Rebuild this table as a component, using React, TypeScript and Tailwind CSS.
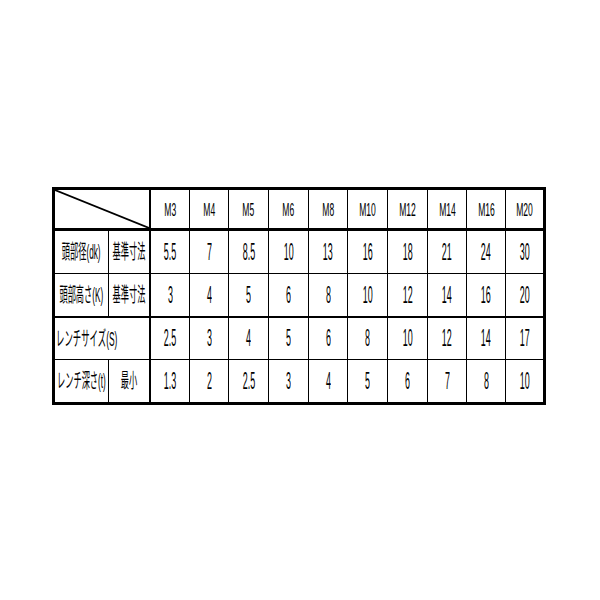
const cols =
  'grid grid-cols-[54px_42px_39px_39px_40px_40px_39px_40px_40px_39px_39px_37px]'

const sizes = ['M3', 'M4', 'M5', 'M6', 'M8', 'M10', 'M12', 'M14', 'M16', 'M20']

const rows = [
  {
    label: '頭部径(dk)',
    sub: '基準寸法',
    values: ['5.5', '7', '8.5', '10', '13', '16', '18', '21', '24', '30'],
    rowClass: 'h-[43px] border-b border-black',
  },
  {
    label: '頭部高さ(K)',
    sub: '基準寸法',
    values: ['3', '4', '5', '6', '8', '10', '12', '14', '16', '20'],
    rowClass: 'h-[44px] border-b-2 border-black',
  },
  {
    label: 'レンチサイズ(S)',
    sub: '',
    values: ['2.5', '3', '4', '5', '6', '8', '10', '12', '14', '17'],
    rowClass: 'h-[42px] border-b border-black',
  },
  {
    label: 'レンチ深さ(t)',
    sub: '最小',
    values: ['1.3', '2', '2.5', '3', '4', '5', '6', '7', '8', '10'],
    rowClass: 'h-[42px]',
  },
]

const jp = "font-['Liberation_Sans','Noto_Sans_CJK_JP',sans-serif]"

const Label = ({ text, left }: { text: string; left?: boolean }) => (
  <span
    className={
      left
        ? `inline-block whitespace-nowrap ${jp} text-[20px] leading-none text-black scale-x-[0.42] origin-left`
        : `inline-block whitespace-nowrap ${jp} text-[20px] leading-none text-black scale-x-[0.41]`
    }
  >
    {text}
  </span>
)

const Num = ({ text }: { text: string }) => (
  <span className="inline-block whitespace-nowrap font-['Liberation_Sans',sans-serif] text-[23px] leading-none text-black scale-x-[0.39]">
    {text}
  </span>
)

const DataCell = ({ i, children }: { i: number; children: React.ReactNode }) => (
  <div
    className={
      i === 9
        ? 'flex min-w-0 items-center justify-center'
        : 'flex min-w-0 items-center justify-center border-r border-black'
    }
  >
    {children}
  </div>
)

export default function App() {
  return (
    <div className="w-[600px] h-[600px] bg-white pt-[187px] pl-[52px]">
      <div className="w-[494px] border-[3px] border-black">
        {/* header */}
        <div className={`${cols} h-[41px] border-b-[3px] border-black`}>
          <div className="relative col-span-2 border-r-2 border-black">
            <svg className="absolute inset-0 h-full w-full" preserveAspectRatio="none" viewBox="0 0 94 41">
              <line x1="0" y1="0" x2="94" y2="41" stroke="#000" strokeWidth="1.8" />
            </svg>
          </div>
          {sizes.map((s, i) => (
            <DataCell key={s} i={i}>
              <span className="inline-block whitespace-nowrap font-['Liberation_Sans',sans-serif] text-[19px] leading-none text-black scale-x-[0.45]">
                {s}
              </span>
            </DataCell>
          ))}
        </div>

        {rows.map((r) => (
          <div key={r.label} className={`${cols} ${r.rowClass}`}>
            {r.sub ? (
              <>
                <div className="flex min-w-0 items-center justify-center border-r border-black">
                  <Label text={r.label} />
                </div>
                <div className="flex min-w-0 items-center justify-center border-r-2 border-black">
                  <Label text={r.sub} />
                </div>
              </>
            ) : (
              <div className="col-span-2 flex min-w-0 items-center justify-start border-r-2 border-black pl-[1px]">
                <Label text={r.label} left />
              </div>
            )}
            {r.values.map((v, i) => (
              <DataCell key={i} i={i}>
                <Num text={v} />
              </DataCell>
            ))}
          </div>
        ))}
      </div>
    </div>
  )
}
